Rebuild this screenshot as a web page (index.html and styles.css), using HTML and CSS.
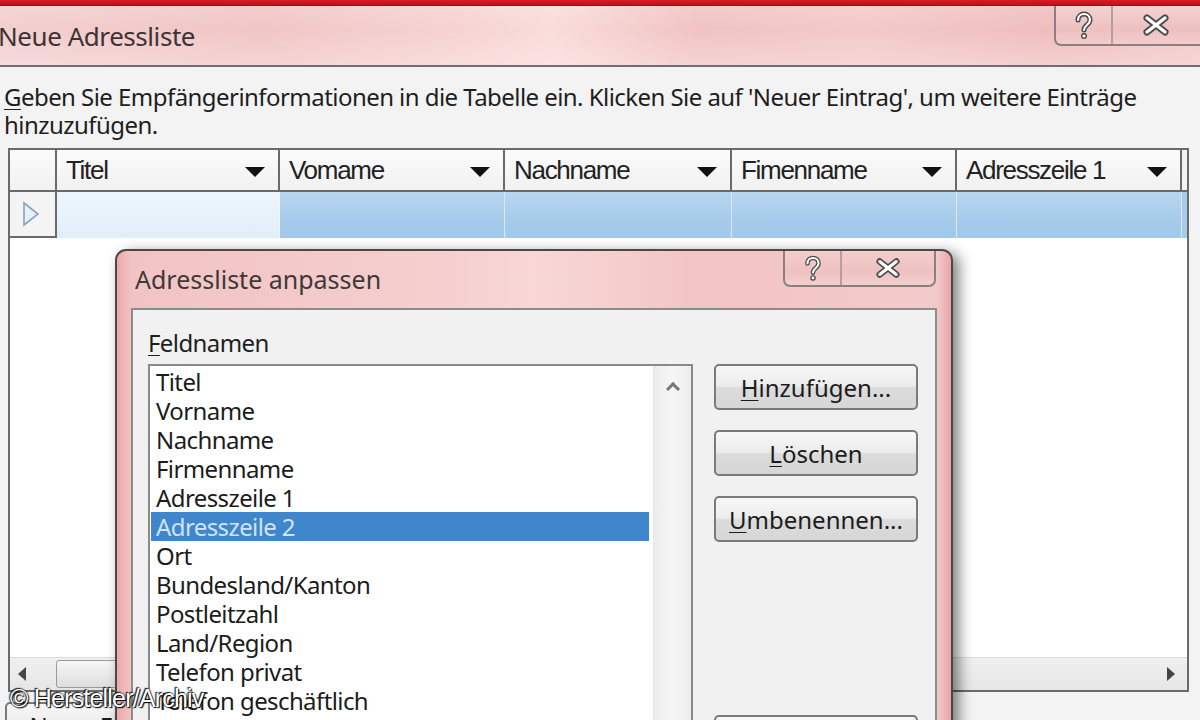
FILE: index.html
```html
<!DOCTYPE html>
<html lang="de">
<head>
<meta charset="utf-8">
<title>Neue Adressliste</title>
<link rel="stylesheet" href="styles.css">
</head>
<body>
<div class="screen">
  <div class="topband"></div>
  <div class="titlebar">
    <span class="wtitle">Neue Adressliste</span>
    <div class="capbtns outer">
      <div class="cb help">
        <svg width="24" height="30" viewBox="-12 -15 24 30"><path class="qo" d="M-6 -5 C-6 -13 6 -13 6 -5 C6 0 0 0 0 5"/><circle class="qdo" cx="0" cy="11" r="3"/><path class="qi" d="M-6 -5 C-6 -13 6 -13 6 -5 C6 0 0 0 0 5"/><circle class="qdi" cx="0" cy="11" r="1.6"/></svg>
      </div>
      <div class="cb close">
        <svg width="30" height="26" viewBox="-15 -13 30 26"><path class="xo" d="M-9 -7 L9 7 M-9 7 L9 -7"/><path class="xi" d="M-9 -7 L9 7 M-9 7 L9 -7"/></svg>
      </div>
    </div>
  </div>
  <div class="client">
    <p class="intro"><u>G</u>eben Sie Empfängerinformationen in die Tabelle ein. Klicken Sie auf 'Neuer Eintrag', um weitere Einträge<br>hinzuzufügen.</p>
    <div class="grid">
      <div class="ghead">
        <div class="hc rh"></div>
        <div class="hc"><span>Titel</span><i class="dd"></i></div>
        <div class="hc"><span>Vomame</span><i class="dd"></i></div>
        <div class="hc"><span>Nachname</span><i class="dd"></i></div>
        <div class="hc"><span>Fimenname</span><i class="dd"></i></div>
        <div class="hc"><span>Adresszeile 1</span><i class="dd"></i></div>
        <div class="hc fill"></div>
      </div>
      <div class="grow">
        <div class="dc rh">
          <svg width="18" height="26" viewBox="0 0 18 26"><path d="M2 2 L16 13 L2 24 Z" fill="#e8f1fa" stroke="#8aa3bf" stroke-width="1.6"/></svg>
        </div>
        <div class="dc first"></div>
        <div class="dc sel"></div>
        <div class="dc sel"></div>
        <div class="dc sel"></div>
        <div class="dc sel"></div>
        <div class="dc fill"></div>
      </div>
      <div class="gbody"></div>
      <div class="hscroll">
        <span class="arr left"></span>
        <span class="thumb"></span>
        <span class="arr right"></span>
      </div>
    </div>
    <div class="bottombar">
      <div class="btn newbtn">Neue<u>r</u> Eintrag</div>
    </div>
  </div>

  <div class="dialog">
    <div class="dtitlebar">
      <span class="dtitle">Adressliste anpassen</span>
      <div class="capbtns inner">
        <div class="cb help">
          <svg width="22" height="28" viewBox="-12 -15 24 30"><path class="qo" d="M-6 -5 C-6 -13 6 -13 6 -5 C6 0 0 0 0 5"/><circle class="qdo" cx="0" cy="11" r="3"/><path class="qi" d="M-6 -5 C-6 -13 6 -13 6 -5 C6 0 0 0 0 5"/><circle class="qdi" cx="0" cy="11" r="1.6"/></svg>
        </div>
        <div class="cb close">
          <svg width="28" height="24" viewBox="-15 -13 30 26"><path class="xo" d="M-9 -7 L9 7 M-9 7 L9 -7"/><path class="xi" d="M-9 -7 L9 7 M-9 7 L9 -7"/></svg>
        </div>
      </div>
    </div>
    <div class="dclient">
      <div class="label"><u>F</u>eldnamen</div>
      <div class="drow">
        <div class="listbox">
          <ul class="items">
            <li>Titel</li>
            <li>Vorname</li>
            <li>Nachname</li>
            <li>Firmenname</li>
            <li>Adresszeile 1</li>
            <li class="on">Adresszeile 2</li>
            <li>Ort</li>
            <li>Bundesland/Kanton</li>
            <li>Postleitzahl</li>
            <li>Land/Region</li>
            <li>Telefon privat</li>
            <li>Telefon geschäftlich</li>
            <li>E-Mail-Adresse</li>
          </ul>
          <div class="vscroll"><span class="up"></span></div>
        </div>
        <div class="btncol">
          <div class="btn"><u>H</u>inzufügen...</div>
          <div class="btn"><u>L</u>öschen</div>
          <div class="btn"><u>U</u>mbenennen...</div>
          <div class="btn lower">Nach <u>o</u>ben</div>
        </div>
      </div>
    </div>
  </div>

  <div class="watermark">© Hersteller/Archiv</div>
</div>
</body>
</html>
```

FILE: styles.css
```css
* { box-sizing: border-box; }
html, body { margin: 0; padding: 0; }
body {
  width: 1200px;
  height: 720px;
  overflow: hidden;
  background: #f3f3f3;
  font-family: "Noto Sans", "Open Sans", sans-serif;
  color: #1b1b1b;
}
.screen {
  position: relative;
  width: 1200px;
  height: 720px;
  overflow: hidden;
  background: #f3f3f3;
}
.topband {
  height: 6px;
  background: linear-gradient(#d81e26, #c2121c 70%, #7c1a1c);
}
.titlebar {
  height: 61px;
  display: flex;
  justify-content: space-between;
  align-items: flex-start;
  background:
    linear-gradient(180deg, rgba(255,255,255,0.15), rgba(255,255,255,0) 40%, rgba(255,240,240,0.35)),
    linear-gradient(90deg, #f3cfcf 0%, #f1c5c5 22%, #f6d3d2 38%, #f9dcda 46%, #f1c3c3 58%, #f3c9c8 72%, #efbdbd 88%, #f2c9c8 100%);
  border-bottom: 2px solid #6f6f6f;
}
.wtitle {
  margin-left: -2px;
  margin-top: 13px;
  font-size: 26px;
  letter-spacing: -0.45px;
  color: #3c3434;
  line-height: 34px;
}
.capbtns {
  display: flex;
  border: 2px solid #8c7f80;
  border-top: none;
  background: linear-gradient(#f5d2d2, #eec0c0 60%, #f3cccc);
}
.capbtns.outer {
  margin-right: -8px;
  height: 40px;
  border-radius: 0 0 0 7px;
}
.capbtns.outer .help { width: 57px; }
.capbtns.outer .close { width: 93px; padding-right: 8px; }
.cb {
  display: flex;
  align-items: center;
  justify-content: center;
}
.cb.help { border-right: 2px solid #b79e9f; }
.qo { fill: none; stroke: #4a4a4a; stroke-width: 5; stroke-linecap: round; }
.qi { fill: none; stroke: #ffffff; stroke-width: 2.2; stroke-linecap: round; }
.qdo { fill: #4a4a4a; }
.qdi { fill: #ffffff; }
.xo { fill: none; stroke: #4a4a4a; stroke-width: 7; stroke-linecap: round; }
.xi { fill: none; stroke: #ffffff; stroke-width: 3.4; stroke-linecap: round; }

.client {
  padding: 16px 0 0 0;
}
.intro {
  margin: 0 0 9px 4px;
  font-size: 24px;
  line-height: 28px;
  letter-spacing: -0.55px;
  color: #1e1e1e;
  white-space: nowrap;
}
.intro u { text-decoration-thickness: 1px; text-underline-offset: 3px; }

.grid {
  margin-left: 8px;
  width: 1181px;
  border: 2px solid #6a6a6a;
  background: #ffffff;
}
.ghead, .grow {
  display: grid;
  grid-template-columns: 47px 223px 225px 227px 225px 225px 5px;
}
.ghead {
  height: 42px;
  border-bottom: 2px solid #6a6a6a;
  background: linear-gradient(#fbfbfb, #f1f1f1);
}
.hc {
  display: flex;
  align-items: center;
  justify-content: space-between;
  padding: 0 13px 0 9px;
  border-right: 2px solid #6a6a6a;
  font-family: "Liberation Sans", Arial, sans-serif;
  font-size: 26px;
  letter-spacing: -1.3px;
  color: #222;
}
.hc.rh { padding: 0; }
.hc.fill { border-right: none; padding: 0; background: #f2f2f2; }
.dd {
  width: 0; height: 0;
  border-left: 10px solid transparent;
  border-right: 10px solid transparent;
  border-top: 10px solid #111;
  margin-top: 4px;
}
.grow { height: 46px; }
.dc { border-right: 1px solid #dbe9f6; }
.dc.rh {
  border-right: 2px solid #6a6a6a;
  border-bottom: 2px solid #6a6a6a;
  background: #f4f4f4;
  display: flex;
  align-items: center;
  padding-left: 12px;
}
.dc.first { background: linear-gradient(#eef6fd, #e0eefa); border-right: 1px solid #f2f8fd; }
.dc.sel { background: linear-gradient(#b8d7f0, #a6cbeb 60%, #a2c8ea); }
.dc.fill { border-right: none; background: #a6cbeb; }
.gbody { height: 419px; background: #ffffff; }
.hscroll {
  height: 33px;
  display: flex;
  align-items: center;
  background: linear-gradient(#f0f0f0, #e6e6e6);
  border-top: 1px solid #dcdcdc;
}
.arr { width: 0; height: 0; border-top: 7px solid transparent; border-bottom: 7px solid transparent; }
.arr.left { border-right: 8px solid #444; margin-left: 8px; }
.arr.right { border-left: 8px solid #444; margin-left: auto; margin-right: 12px; }
.thumb {
  margin-left: 30px;
  width: 300px;
  height: 28px;
  border: 1px solid #9a9a9a;
  border-radius: 3px;
  background: linear-gradient(#f6f6f6, #dedede);
}
.bottombar { padding: 10px 0 0 5px; }
.btn {
  display: flex;
  align-items: center;
  justify-content: center;
  height: 46px;
  flex-shrink: 0;
  border: 2px solid #7a7a7a;
  border-radius: 5px;
  background: linear-gradient(#f7f7f7 0%, #ececec 48%, #dcdcdc 52%, #d6d6d6 100%);
  font-size: 24px;
  letter-spacing: 0;
  color: #1c1c1c;
  white-space: nowrap;
}
.btn u { text-decoration-thickness: 1px; text-underline-offset: 3px; }
.newbtn { width: 200px; }

.dialog {
  position: absolute;
  left: 115px;
  top: 249px;
  width: 838px;
  height: 520px;
  border: 2px solid #4f4646;
  border-radius: 11px 11px 0 0;
  background: linear-gradient(90deg, #eaa9ac 0, #f2c3c4 14px, #f5cfcf 40%, #f7d8d7 50%, #f2c4c4 70%, #f3cacb calc(100% - 14px), #e7a6a9 100%);
  box-shadow: 6px 4px 14px rgba(0,0,0,0.5);
  display: flex;
  flex-direction: column;
}
.dtitlebar {
  height: 57px;
  flex-shrink: 0;
  display: flex;
  justify-content: space-between;
  align-items: flex-start;
  padding: 0 15px 0 18px;
}
.dtitle {
  margin-top: 12px;
  font-size: 25px;
  letter-spacing: 0;
  color: #3e3838;
  line-height: 32px;
}
.capbtns.inner {
  height: 36px;
  border-radius: 0 0 7px 7px;
  background: linear-gradient(#f4cdcd, #efc1c1 60%, #f4cfcf);
}
.capbtns.inner .help { width: 57px; }
.capbtns.inner .close { width: 92px; }
.dclient {
  flex: 1 1 auto;
  min-height: 0;
  overflow: hidden;
  margin: 0 14px;
  border: 2px solid #8c8c8c;
  background: #f1f1f1;
  padding: 18px 0 0 15px;
}
.label {
  font-size: 24px;
  line-height: 29px;
  letter-spacing: -0.6px;
  color: #1e1e1e;
}
.label u { text-decoration-thickness: 1px; text-underline-offset: 3px; }
.drow {
  display: flex;
  align-items: flex-start;
  gap: 21px;
  margin-top: 7px;
}
.listbox {
  width: 545px;
  height: 420px;
  flex-shrink: 0;
  border: 2px solid #8a8a8a;
  background: #ffffff;
  display: flex;
}
.items {
  list-style: none;
  margin: 0;
  padding: 1px 4px 0 1px;
  flex: 1;
  overflow: hidden;
}
.items li {
  height: 29px;
  line-height: 29px;
  padding-left: 5px;
  font-size: 24px;
  letter-spacing: -0.6px;
  color: #1c1c1c;
  white-space: nowrap;
}
.items li.on {
  background: #3f86cc;
  color: #cfe4f8;
}
.vscroll {
  width: 38px;
  background: linear-gradient(90deg, #ececec, #f6f6f6 50%, #ececec);
  border-left: 1px solid #e4e4e4;
  display: flex;
  justify-content: center;
}
.up {
  margin-top: 18px;
  width: 10px; height: 10px;
  border-left: 3px solid #777;
  border-top: 3px solid #777;
  transform: rotate(45deg);
}
.btncol {
  width: 204px;
  flex-shrink: 0;
  display: flex;
  flex-direction: column;
  gap: 20px;
}
.btncol .lower { margin-top: 153px; }

.watermark {
  position: absolute;
  left: 10px;
  top: 684px;
  font-family: "Liberation Sans", Arial, sans-serif;
  font-size: 25px;
  letter-spacing: -0.8px;
  color: #ffffff;
  text-shadow: 0 0 2px #000, 1px 1px 1px #000, -1px -1px 1px #222;
}
```
